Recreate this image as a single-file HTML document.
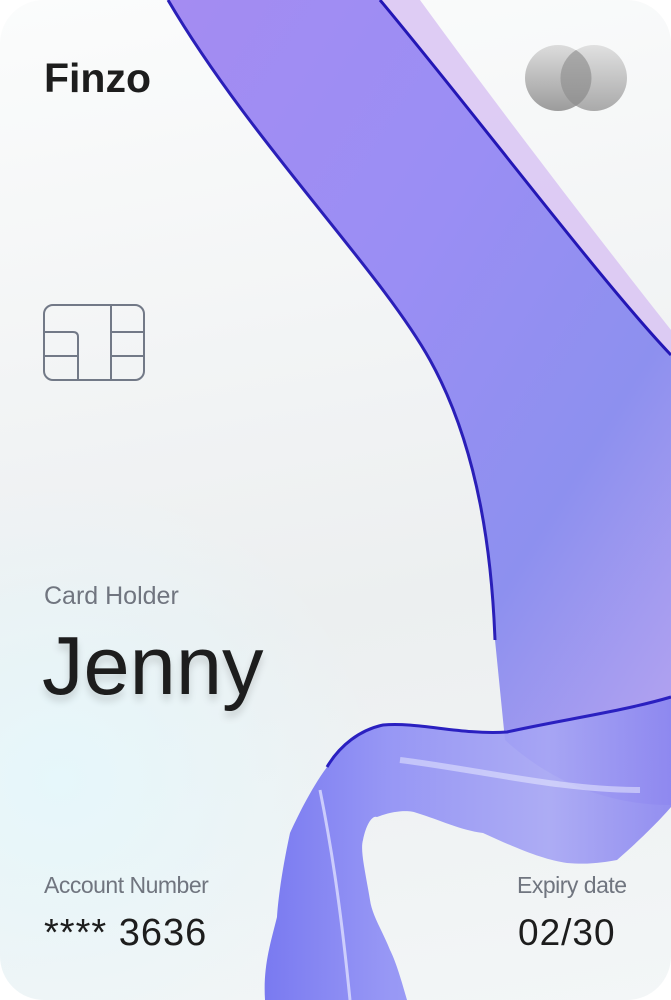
<!DOCTYPE html>
<html><head><meta charset="utf-8"><style>
html,body{margin:0;padding:0;background:#fff;}
.card{position:relative;width:671px;height:1000px;border-radius:44px;overflow:hidden;
background:radial-gradient(ellipse 320px 300px at 60px 780px,#e6f7fb 0%,rgba(230,247,251,0) 100%),linear-gradient(170deg,#fbfcfc 0%,#f1f3f4 40%,#eceff0 60%,#f3f6f7 100%);
font-family:"Liberation Sans",sans-serif;}
svg.rib{position:absolute;left:0;top:0}
.t{position:absolute;color:#1d1d1d;white-space:nowrap}
</style></head><body><div class="card">
<svg class="rib" width="671" height="1000" viewBox="0 0 671 1000">
<defs>
<linearGradient id="g1" x1="0" y1="0" x2="1" y2="1">
<stop offset="0" stop-color="#a48cf2"/><stop offset="0.4" stop-color="#9a8ef4"/><stop offset="0.7" stop-color="#8d90ef"/><stop offset="1" stop-color="#b9a6f0"/></linearGradient>
<linearGradient id="g2" x1="0" y1="0" x2="1" y2="0">
<stop offset="0" stop-color="#6f6ff0"/><stop offset="0.3" stop-color="#8f8ff5"/><stop offset="0.7" stop-color="#a7a6f4"/><stop offset="1" stop-color="#8b86f0"/></linearGradient>
</defs>
<path d="M168,0 C250,140 380,270 430,360 C480,450 492,560 495,640 L505,740 C560,790 620,805 671,805 L671,355 C600,280 480,120 380,0 Z" fill="url(#g1)"/>
<path d="M380,0 C480,120 600,280 671,355 L671,330 C600,240 500,110 420,0 Z" fill="#d7c0f2" opacity="0.8"/>
<path d="M671,697 C640,705 620,712 600,713 C560,720 530,732 507,732 C460,735 420,722 383,725 C360,730 340,745 327,767 C310,790 296,820 290,833 C282,870 278,900 277,917 C270,945 263,967 265,1000 L407,1000 C400,975 395,960 390,950 C382,930 372,915 370,900 C365,870 360,850 363,840 C366,825 372,815 377,817 C395,810 410,810 417,813 C440,820 460,830 483,833 C520,850 545,860 567,863 C590,865 605,862 617,860 C640,840 660,820 671,807 Z" fill="url(#g2)" opacity="0.92"/>
<path d="M168,0 C250,140 380,270 430,360 C480,450 492,560 495,640" stroke="#2a1fb8" stroke-width="3" fill="none"/>
<path d="M380,0 C480,120 600,280 671,355" stroke="#2317b5" stroke-width="3" fill="none"/>
<path d="M671,697 C620,712 560,720 507,732 C460,735 420,722 383,725 C360,730 340,745 327,767" stroke="#2a20c0" stroke-width="3" fill="none"/>
<path d="M320,790 C330,840 340,900 350,1000" stroke="#e8eaff" stroke-width="3" fill="none" opacity="0.7"/>
<path d="M400,760 C480,770 560,790 640,790" stroke="#eef0ff" stroke-width="6" fill="none" opacity="0.5"/>
</svg>
<div class="t" style="left:44px;top:55px;font-size:41px;font-weight:bold">Finzo</div>
<svg style="position:absolute;left:524px;top:44px" width="104" height="68">
<defs><linearGradient id="mc" x1="0" y1="0" x2="0" y2="1"><stop offset="0" stop-color="#dcdcdc"/><stop offset="1" stop-color="#9c9c9c"/></linearGradient></defs>
<circle cx="34" cy="34" r="33" fill="url(#mc)"/><circle cx="70" cy="34" r="33" fill="url(#mc)" opacity="0.85"/>
<path d="M52,6 A33,33 0 0 1 52,62 A33,33 0 0 1 52,6 Z" fill="#8a8a8a" opacity="0.6"/></svg>
<svg style="position:absolute;left:43px;top:304px" width="102" height="78" fill="none" stroke="#727987" stroke-width="2">
<rect x="1" y="1" width="100" height="75" rx="9"/>
<path d="M1,28 H30 Q35,28 35,33 V76"/><path d="M68,1 V76"/><path d="M1,52 H35"/><path d="M68,28 H101"/><path d="M68,52 H101"/></svg>
<div class="t" style="left:44px;top:582px;font-size:25px;color:#70757f">Card Holder</div>
<div class="t" style="left:42px;top:618px;font-size:83px;text-shadow:0 6px 8px rgba(0,0,0,0.15)">Jenny</div>
<div class="t" style="left:44px;top:872px;font-size:23px;color:#70757f;letter-spacing:-0.5px">Account Number</div>
<div class="t" style="left:44px;top:912px;font-size:38px;letter-spacing:1px">**** 3636</div>
<div class="t" style="left:517px;top:872px;font-size:23px;color:#70757f;letter-spacing:-0.5px">Expiry date</div>
<div class="t" style="left:518px;top:912px;font-size:37px;letter-spacing:1px">02/30</div>
</div></body></html>
